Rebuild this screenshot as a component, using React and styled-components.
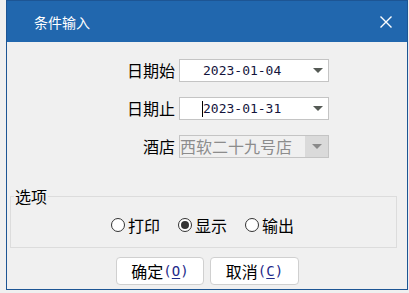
import React, { useState } from 'react';
import styled, { createGlobalStyle } from 'styled-components';

const GlobalStyle = createGlobalStyle`
  html, body {
    margin: 0;
    padding: 0;
    background: #f0f0f0;
  }
  body {
    font-family: "Noto Sans CJK SC", "Liberation Sans", sans-serif;
  }
`;

const Page = styled.div`
  width: 409px;
  height: 293px;
  padding-left: 6px;
  box-sizing: border-box;
`;

const Window = styled.div`
  width: 402px;
  height: 290px;
  box-sizing: border-box;
  border: 1px solid #1d5594;
  display: flex;
  flex-direction: column;
  background: #f0f0f0;
`;

const TitleBar = styled.div`
  height: 41px;
  flex-shrink: 0;
  background: #2167ae;
  color: #ffffff;
  display: flex;
  align-items: center;
  justify-content: space-between;
  padding: 0 15px 0 27px;
  box-sizing: border-box;
  font-size: 14px;
  line-height: 16px;
`;

const CloseIcon = styled.svg`
  width: 12px;
  height: 12px;
  display: block;
`;

const Body = styled.div`
  flex: 1;
  display: flex;
  flex-direction: column;
  padding: 17px 3px 0 3px;
`;

const Form = styled.div`
  display: grid;
  grid-template-columns: 165px 150px;
  column-gap: 4px;
  row-gap: 15px;
  align-items: center;
`;

const Label = styled.div`
  text-align: right;
  font-size: 16px;
  line-height: 23px;
  color: #000;
`;

const Combo = styled.div`
  height: 23px;
  box-sizing: border-box;
  border: 1px solid #c4c4c4;
  background: ${p => (p.$disabled ? '#f0f0f0' : '#ffffff')};
  display: flex;
  align-items: stretch;
`;

const ComboText = styled.div`
  flex: 1;
  display: flex;
  align-items: center;
  padding-left: ${p => p.$pad}px;
  font-family: ${p => (p.$mono ? '"DejaVu Sans Mono", monospace' : '"Noto Sans CJK SC", sans-serif')};
  font-size: ${p => (p.$mono ? '13px' : '16px')};
  color: ${p => (p.$disabled ? '#8c8c8c' : '#14143c')};
  line-height: 21px;
  white-space: nowrap;
`;

const Caret = styled.span`
  display: inline-block;
  width: 1px;
  height: 16px;
  background: #000;
`;

const ArrowBox = styled.div`
  width: 23px;
  flex-shrink: 0;
  display: flex;
  align-items: center;
  justify-content: center;
  background: ${p => (p.$disabled ? '#dadada' : 'transparent')};
`;

const Arrow = styled.svg`
  width: 10px;
  height: 5px;
  display: block;
  margin-left: ${p => (p.$disabled ? '0' : '2px')};
`;

const Group = styled.fieldset`
  margin: 29px 7px 0 0;
  padding: 0 0 10px 0;
  border: 1px solid #dcdcdc;
  height: 61px;
  box-sizing: border-box;
  display: flex;
  justify-content: center;
`;

const Legend = styled.legend`
  padding: 0 1px;
  margin-left: 3px;
  font-size: 16px;
  line-height: 18px;
  color: #000;
`;

const RadioRow = styled.div`
  display: flex;
  gap: 18px;
  align-items: center;
  margin-top: 10px;
  margin-left: -2px;
`;

const RadioItem = styled.label`
  display: flex;
  align-items: center;
  gap: 3px;
  font-size: 16px;
  line-height: 20px;
  color: #000;
  cursor: pointer;
`;

const RadioCircle = styled.span`
  width: 14px;
  height: 14px;
  box-sizing: border-box;
  border-radius: 50%;
  border: 1px solid #333333;
  background: #ffffff;
  display: flex;
  align-items: center;
  justify-content: center;
  &::after {
    content: '';
    width: 8px;
    height: 8px;
    border-radius: 50%;
    background: ${p => (p.$on ? '#333333' : 'transparent')};
  }
`;

const ButtonRow = styled.div`
  display: flex;
  justify-content: center;
  gap: 6px;
  margin-top: 9px;
  padding-left: 1px;
`;

const Button = styled.button`
  width: ${p => p.$w}px;
  height: 28px;
  border: 1px solid #d0d0d0;
  border-radius: 4px;
  background: #ffffff;
  font-family: "Noto Sans CJK SC", sans-serif;
  font-size: 16px;
  line-height: 20px;
  color: #000;
  padding: 0;
  display: flex;
  align-items: center;
  justify-content: center;
`;

const Key = styled.span`
  font-family: "DejaVu Sans Mono", monospace;
  font-size: 14px;
  color: #1e2a8a;
  & u {
    text-underline-offset: 2px;
  }
`;

function DropArrow({ disabled }) {
  return (
    <Arrow viewBox="0 0 10 5" $disabled={disabled}>
      <path d="M0 0 H10 L5 5 Z" fill={disabled ? '#8a8a8a' : '#555a55'} />
    </Arrow>
  );
}

export default function App() {
  const [mode, setMode] = useState('show');
  const options = [
    { key: 'print', label: '打印' },
    { key: 'show', label: '显示' },
    { key: 'out', label: '输出' },
  ];

  return (
    <Page>
      <GlobalStyle />
      <Window>
        <TitleBar>
          <span>条件输入</span>
          <CloseIcon viewBox="0 0 12 12">
            <path d="M0.5 0.5 L11.5 11.5 M11.5 0.5 L0.5 11.5" stroke="#fff" strokeWidth="1.4" />
          </CloseIcon>
        </TitleBar>
        <Body>
          <Form>
            <Label>日期始</Label>
            <Combo>
              <ComboText $mono $pad={23}>2023-01-04</ComboText>
              <ArrowBox><DropArrow /></ArrowBox>
            </Combo>
            <Label>日期止</Label>
            <Combo>
              <ComboText $mono $pad={22}><Caret />2023-01-31</ComboText>
              <ArrowBox><DropArrow /></ArrowBox>
            </Combo>
            <Label>酒店</Label>
            <Combo $disabled>
              <ComboText $disabled $pad={0}>西软二十九号店</ComboText>
              <ArrowBox $disabled><DropArrow disabled /></ArrowBox>
            </Combo>
          </Form>
          <Group>
            <Legend>选项</Legend>
            <RadioRow>
              {options.map(o => (
                <RadioItem key={o.key} onClick={() => setMode(o.key)}>
                  <RadioCircle $on={mode === o.key} />
                  {o.label}
                </RadioItem>
              ))}
            </RadioRow>
          </Group>
          <ButtonRow>
            <Button $w={88}>确定<Key>(<u>O</u>)</Key></Button>
            <Button $w={89}>取消<Key>(<u>C</u>)</Key></Button>
          </ButtonRow>
        </Body>
      </Window>
    </Page>
  );
}
